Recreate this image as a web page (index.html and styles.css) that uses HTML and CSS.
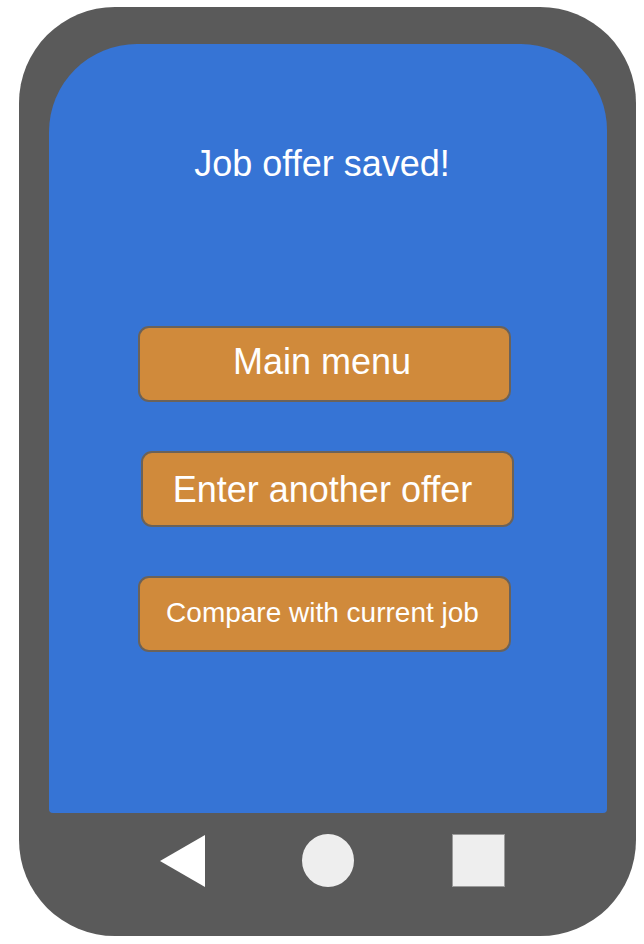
FILE: index.html
```html
<!DOCTYPE html>
<html>
<head>
<meta charset="utf-8">
<link rel="stylesheet" href="styles.css">
</head>
<body>
<div class="phone">
  <div class="screen">
    <div class="title">Job offer saved!</div>
    <div class="buttons">
      <div class="btn btn-a">Main menu</div>
      <div class="btn btn-b">Enter another offer</div>
      <div class="btn btn-a btn-small">Compare with current job</div>
    </div>
  </div>
  <div class="nav">
    <svg class="back" width="45" height="52" viewBox="0 0 45 52"><polygon points="45,0 45,52 0,26" fill="#ffffff"/></svg>
    <div class="home"></div>
    <div class="recent"></div>
  </div>
</div>
</body>
</html>
```
FILE: styles.css
```css
html, body {
  margin: 0;
  padding: 0;
  background: #ffffff;
}
body {
  font-family: "Liberation Sans", Arial, sans-serif;
}
.phone {
  margin: 7px 0 0 19px;
  width: 617px;
  height: 929px;
  box-sizing: border-box;
  padding: 37px 29px 0 30px;
  background: #5a5a5a;
  border-radius: 96px;
  display: flex;
  flex-direction: column;
}
.screen {
  height: 769px;
  background: #3674d5;
  border-radius: 88px 86px 4px 4px;
  box-sizing: border-box;
  padding-top: 100px;
  display: flex;
  flex-direction: column;
}
.title {
  color: #ffffff;
  font-size: 36px;
  line-height: 40px;
  text-align: center;
  padding-right: 12px;
}
.buttons {
  margin-top: 142px;
  display: flex;
  flex-direction: column;
  gap: 49px;
}
.btn {
  width: 373px;
  height: 76px;
  box-sizing: border-box;
  background: #d08a3b;
  border: 2px solid #6b6259;
  border-radius: 11px;
  color: #ffffff;
  font-size: 36px;
  display: flex;
  align-items: center;
  justify-content: center;
  padding: 0 5px 4px 0;
}
.btn-a {
  margin-left: 89px;
}
.btn-b {
  margin-left: 92px;
  padding: 1px 10px 0 0;
}
.btn-small {
  font-size: 28px;
  padding: 0 4px 3px 0;
}
.nav {
  display: flex;
  align-items: center;
  padding: 21px 0 0 111px;
  height: 53px;
}
.back {
  display: block;
}
.home {
  width: 52px;
  height: 53px;
  border-radius: 50%;
  background: #eeeeee;
  margin-left: 97px;
}
.recent {
  width: 53px;
  height: 53px;
  box-sizing: border-box;
  background: #eeeeee;
  border: 1px solid #9a9a9a;
  margin-left: 98px;
}
```
